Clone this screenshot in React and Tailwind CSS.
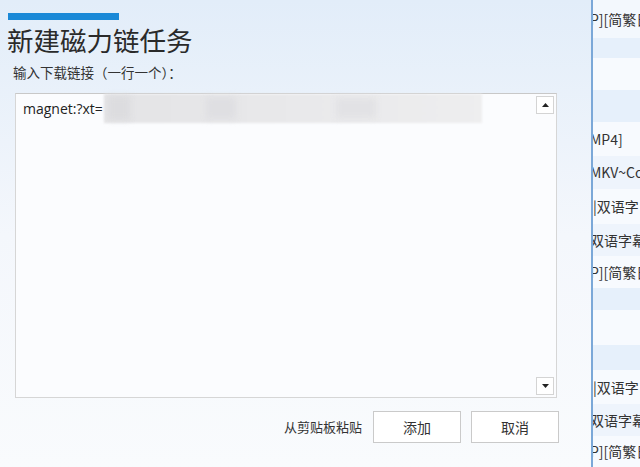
import React from 'react';

const cjk = { fontFamily: '"Noto Sans CJK SC", "Noto Sans", sans-serif' };

// list rows peeking out from behind the dialog
const rows = [
  { h: 38, text: 'P][简繁日', bg: 'bg-[#f3f8fd]', shift: true },
  { h: 20, text: '', bg: 'bg-[#e6f0fb]' },
  { h: 32, text: '', bg: 'bg-[#f7fafe]' },
  { h: 32, text: '', bg: 'bg-[#e6f0fb]' },
  { h: 34, text: 'MP4]', bg: 'bg-[#f7fafe]', shift: true },
  { h: 33, text: 'MKV~Co', bg: 'bg-[#eef4fc]', shift: true },
  { h: 35, text: '|双语字', bg: 'bg-[#f7fafe]' },
  { h: 32, text: '双语字幕', bg: 'bg-[#eef4fc]', shift: true },
  { h: 32, text: 'P][简繁日', bg: 'bg-[#f7fafe]', shift: true },
  { h: 22, text: '', bg: 'bg-[#e6f0fb]' },
  { h: 35, text: '', bg: 'bg-[#f7fafe]' },
  { h: 25, text: '', bg: 'bg-[#e6f0fb]' },
  { h: 34, text: '|双语字', bg: 'bg-[#f7fafe]' },
  { h: 32, text: '双语字幕', bg: 'bg-[#eef4fc]', shift: true },
  { h: 31, text: 'P][简繁日', bg: 'bg-[#f7fafe]', shift: true },
];

function ScrollBtn({ up }) {
  return (
    <div className="w-[18px] h-[18px] bg-white border border-[#d4d4d4] flex items-center justify-center">
      <svg width="7" height="4" viewBox="0 0 7 4">
        <path d={up ? 'M0 4 L3.5 0 L7 4 Z' : 'M0 0 L3.5 4 L7 0 Z'} fill="#222" />
      </svg>
    </div>
  );
}

export default function App() {
  return (
    <div className="w-[640px] h-[467px] flex overflow-hidden bg-white" style={cjk}>
      {/* dialog */}
      <div className="w-[591px] h-full flex flex-col bg-gradient-to-b from-[#e2edf9] via-[#f4f7fc] to-[#f9fbfd]">
        <div className="ml-[8px] mt-[13px] w-[111px] h-[7px] bg-[#1a89d7]" />
        <div className="ml-[7px] mt-[4px] text-[26.5px] leading-[32px] text-[#2a2a2a]">新建磁力链任务</div>
        <div className="ml-[13px] mt-[6px] text-[13.5px] leading-[20px] text-[#333]">输入下载链接（一行一个）：</div>

        <div className="relative ml-[15px] mt-[11px] w-[542px] h-[305px] bg-[#fbfcfe] border border-[#d6d6d6] border-t-[#c8c8c8]">
          <div className="pl-[7px] pt-[5px] text-[14px] leading-[20px] text-[#222]" style={{ fontFamily: '"Open Sans", "Noto Sans", sans-serif' }}>
            magnet:?xt=
          </div>
          {/* pixelated link */}
          <div className="absolute left-[88px] top-0 w-[378px] h-[29px] bg-gradient-to-r from-[#e4e4e6] via-[#e9e9eb] to-[#eeeeef] blur-[1px]" />
          <div className="absolute left-[92px] top-[2px] w-[22px] h-[24px] bg-[#dcdcdf] blur-[3px]" />
          <div className="absolute left-[190px] top-[3px] w-[30px] h-[22px] bg-[#dfdfe2] blur-[3px]" />
          <div className="absolute left-[320px] top-[4px] w-[40px] h-[20px] bg-[#e2e2e5] blur-[3px]" />
          <div className="absolute right-[2px] top-[2px]">
            <ScrollBtn up />
          </div>
          <div className="absolute right-[2px] bottom-[2px]">
            <ScrollBtn />
          </div>
        </div>

        <div className="mt-[13px] flex items-center justify-end pr-[32px]">
          <span className="text-[13px] text-[#333] mr-[11px]">从剪贴板粘贴</span>
          <button className="w-[88px] h-[32px] bg-white border border-[#cacaca] text-[14px] text-[#333]">添加</button>
          <button className="ml-[10px] w-[88px] h-[32px] bg-white border border-[#cacaca] text-[14px] text-[#333]">取消</button>
        </div>
      </div>

      {/* list behind */}
      <div className="flex-1 h-full border-l-[2px] border-[#7ba8d8] flex flex-col overflow-hidden">
        {rows.map((r, i) => (
          <div key={i} className={`${r.bg} flex items-center overflow-hidden whitespace-nowrap shrink-0`} style={{ height: r.h }}>
            <span className={r.shift ? 'text-[14px] text-[#333] -ml-[3px]' : 'text-[14px] text-[#333]'}>{r.text}</span>
          </div>
        ))}
      </div>
    </div>
  );
}
